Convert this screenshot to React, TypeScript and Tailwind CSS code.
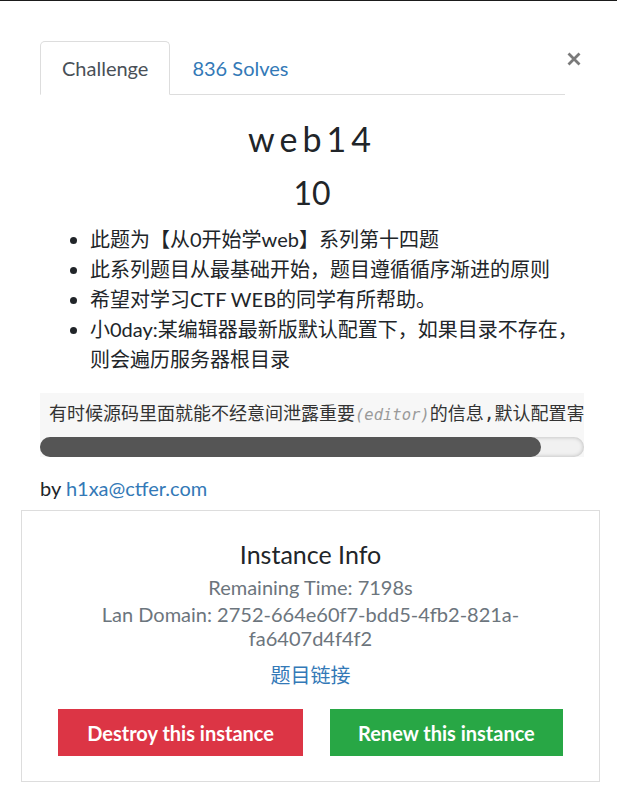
import React from "react";

const lato = { fontFamily: '"Lato", "Noto Sans CJK SC", sans-serif' } as const;

export default function App() {
  return (
    <div className="w-[617px] h-[792px] bg-white overflow-hidden text-[#212529]" style={lato}>
      <div className="h-[1px] bg-[#1b1b1b]" />
      <div className="pl-[40px] pr-[33px] pt-[40px]">
        {/* header tabs */}
        <div className="flex items-start">
          <div className="flex-1 flex border-b border-[#dddddd]">
            <div className="-mb-[1px] border border-[#dddddd] border-b-white rounded-t-[5px] bg-white px-[21px] pt-[12px] pb-[11px] text-[20px] leading-[28px] text-[#495057]">
              Challenge
            </div>
            <div className="px-[21px] pt-[12px] pb-[11px] text-[20px] leading-[28px] text-[#3379b7] border border-transparent">
              836 Solves
            </div>
          </div>
          <button className="ml-[2px] mr-[3px] mt-[11px] w-[14px] h-[14px]" aria-label="Close">
            <svg width="14" height="14" viewBox="0 0 14 14">
              <path d="M1.5 1.5 L12.5 12.5 M12.5 1.5 L1.5 12.5" stroke="#7a7a7a" strokeWidth="2.8" strokeLinecap="butt" />
            </svg>
          </button>
        </div>

        {/* title */}
        <h2 className="mt-[23px] text-center text-[34px] leading-[42px] tracking-[5px] text-[#212529]">web14</h2>
        <h3 className="mt-[14px] text-center text-[32px] leading-[38px] text-[#212529]">10</h3>

        <ul className="mt-[12px] list-disc pl-[50px] text-[20px] leading-[30px] text-[#212529]">
          <li>此题为【从0开始学web】系列第十四题</li>
          <li>此系列题目从最基础开始，题目遵循循序渐进的原则</li>
          <li>希望对学习CTF WEB的同学有所帮助。</li>
          <li>小0day:某编辑器最新版默认配置下，如果目录不存在，则会遍历服务器根目录</li>
        </ul>

        {/* code block */}
        <div className="mt-[19px] bg-[#f7f7f7]">
          <div
            className="overflow-hidden whitespace-nowrap pl-[9px] pt-[8px] pb-[9px] text-[18px] leading-[26px] text-[#333333]"
            style={{ fontFamily: '"DejaVu Sans Mono", "Noto Sans CJK SC", monospace' }}
          >
            有时候源码里面就能不经意间泄露重要<span className="italic text-[#9a9a9a] text-[15.5px]">(editor)</span>的信息,默认配置害
          </div>
          <div className="relative h-[20px] rounded-full bg-[#f1f1f1] shadow-[inset_0_0_4px_rgba(0,0,0,0.25)]">
            <div className="absolute left-0 top-0 h-[20px] w-[501px] rounded-full bg-[#555555]" />
          </div>
        </div>

        <p className="mt-[16px] text-[20px] leading-[30px] text-[#212529]">
          by <span className="text-[#3379b7]">h1xa@ctfer.com</span>
        </p>

        {/* instance box */}
        <div className="mt-[7px] -ml-[19px] -mr-[16px] border border-[#dddddd] pt-[28px] pb-[25px] text-center">
          <h5 className="text-[25px] leading-[30px] text-[#212529]">Instance Info</h5>
          <p className="mt-[3px] text-[20px] leading-[30px] text-[#6c757d]">Remaining Time: 7198s</p>
          <p className="mx-auto w-[440px] text-[20px] leading-[24px] text-[#6c757d]">
            Lan Domain: 2752-664e60f7-bdd5-4fb2-821a-fa6407d4f4f2
          </p>
          <p className="mt-[10px] text-[20px] leading-[30px] text-[#3379b7]">题目链接</p>
          <div className="mt-[19px] flex justify-center gap-[27px]">
            <button className="h-[47px] px-[29px] bg-[#dc3545] text-white text-[20px] font-bold">
              Destroy this instance
            </button>
            <button className="h-[47px] px-[28px] bg-[#28a745] text-white text-[20px] font-bold">
              Renew this instance
            </button>
          </div>
        </div>
      </div>
    </div>
  );
}
